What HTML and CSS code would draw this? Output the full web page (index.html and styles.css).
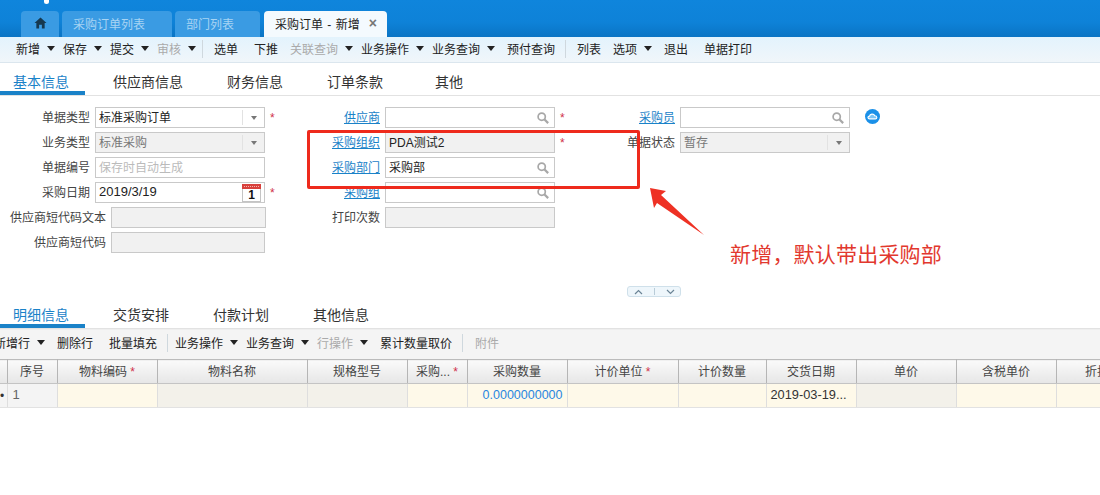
FILE: index.html
```html
<!DOCTYPE html>
<html lang="zh-CN">
<head>
    <meta charset="UTF-8">
    <title>采购订单 - 新增</title>
    <link rel="stylesheet" href="styles.css">
</head>
<body>
    <!-- 顶部标签 -->
    <div class="topbar">
        <span class="logo-dot"></span>
        <div class="tab tab-home">
            <svg width="13" height="12" viewBox="0 0 14 13"><path d="M7 0.5 L0.5 6.5 L2.5 6.5 L2.5 12.5 L5.5 12.5 L5.5 8.5 L8.5 8.5 L8.5 12.5 L11.5 12.5 L11.5 6.5 L13.5 6.5 Z" fill="#16384f"/></svg>
        </div>
        <div class="tab tab-list">采购订单列表</div>
        <div class="tab tab-dept">部门列表</div>
        <div class="tab tab-active">采购订单 - 新增<span class="tab-close">×</span></div>
    </div>

    <div class="toolbar">
        <span class="tool w-47">新增<i class="caret"></i></span>
        <span class="tool w-47">保存<i class="caret"></i></span>
        <span class="tool w-47">提交<i class="caret"></i></span>
        <span class="tool off w-45">审核<i class="caret"></i></span>
        <span class="sep"></span>
        <span class="tool w-40">选单</span>
        <span class="tool w-36">下推</span>
        <span class="tool off w-71">关联查询<i class="caret"></i></span>
        <span class="tool w-71">业务操作<i class="caret"></i></span>
        <span class="tool w-75">业务查询<i class="caret"></i></span>
        <span class="tool w-58">预付查询</span>
        <span class="sep"></span>
        <span class="tool w-36">列表</span>
        <span class="tool w-51">选项<i class="caret"></i></span>
        <span class="tool w-40">退出</span>
        <span class="tool">单据打印</span>
    </div>

    <div class="subtabs">
        <span class="subtab current">基本信息</span>
        <span class="subtab">供应商信息</span>
        <span class="subtab">财务信息</span>
        <span class="subtab">订单条款</span>
        <span class="subtab last">其他</span>
    </div>

    <!-- 表单 -->
    <div class="form">
        <div class="col col-first">
            <div class="row">
                <label>单据类型</label>
                <div class="field"><span class="val">标准采购订单</span><span class="drop"><i class="mini-caret"></i></span></div>
                <span class="star">*</span>
            </div>
            <div class="row">
                <label>业务类型</label>
                <div class="field locked"><span class="val muted">标准采购</span><span class="drop"><i class="mini-caret"></i></span></div>
            </div>
            <div class="row">
                <label>单据编号</label>
                <div class="field"><span class="val hint">保存时自动生成</span></div>
            </div>
            <div class="row">
                <label>采购日期</label>
                <div class="field"><span class="val date-val">2019/3/19</span>
                    <svg class="cal" width="19" height="18" viewBox="0 0 19 18"><rect x="0.5" y="0.5" width="18" height="17" fill="#fff" stroke="#c4c4c4"/><rect x="0" y="0" width="19" height="5" fill="#d8413c"/><path d="M2 2.5 H17" stroke="#f3b5b0" stroke-dasharray="1 1"/><text x="9.5" y="15" text-anchor="middle" class="cal-num">1</text></svg>
                </div>
                <span class="star">*</span>
            </div>
            <div class="row row-long">
                <label>供应商短代码文本</label>
                <div class="field locked"></div>
            </div>
            <div class="row row-long">
                <label>供应商短代码</label>
                <div class="field locked short"></div>
            </div>
        </div>

        <div class="col">
            <div class="row">
                <label><a>供应商</a></label>
                <div class="field"><span class="val"></span><svg class="search" width="12" height="12" viewBox="0 0 14 14"><circle cx="5.5" cy="5.5" r="4.2" fill="none" stroke="#a8a8a8" stroke-width="2"/><path d="M8.5 8.5 L13 13" stroke="#a8a8a8" stroke-width="2.6"/></svg></div>
                <span class="star">*</span>
            </div>
            <div class="row">
                <label><a>采购组织</a></label>
                <div class="field locked"><span class="val">PDA测试2</span></div>
                <span class="star">*</span>
            </div>
            <div class="row">
                <label><a>采购部门</a></label>
                <div class="field"><span class="val">采购部</span><svg class="search" width="12" height="12" viewBox="0 0 14 14"><circle cx="5.5" cy="5.5" r="4.2" fill="none" stroke="#a8a8a8" stroke-width="2"/><path d="M8.5 8.5 L13 13" stroke="#a8a8a8" stroke-width="2.6"/></svg></div>
            </div>
            <div class="row">
                <label><a>采购组</a></label>
                <div class="field"><span class="val"></span><svg class="search" width="12" height="12" viewBox="0 0 14 14"><circle cx="5.5" cy="5.5" r="4.2" fill="none" stroke="#a8a8a8" stroke-width="2"/><path d="M8.5 8.5 L13 13" stroke="#a8a8a8" stroke-width="2.6"/></svg></div>
            </div>
            <div class="row">
                <label>打印次数</label>
                <div class="field locked"></div>
            </div>
        </div>

        <div class="col">
            <div class="row">
                <label><a>采购员</a></label>
                <div class="field"><span class="val"></span><svg class="search" width="12" height="12" viewBox="0 0 14 14"><circle cx="5.5" cy="5.5" r="4.2" fill="none" stroke="#a8a8a8" stroke-width="2"/><path d="M8.5 8.5 L13 13" stroke="#a8a8a8" stroke-width="2.6"/></svg></div>
                <svg class="cloud" width="15" height="15" viewBox="0 0 16 16"><circle cx="8" cy="8" r="8" fill="#1a90e8"/><path d="M5 10.5 C2.6 10.5 2.6 7.6 4.8 7.6 C5.2 5 9.4 4.6 10.4 7.2 C13 7 13.4 10.5 11 10.5 Z" fill="#7cc4f4" stroke="#fff" stroke-width="1.2"/></svg>
            </div>
            <div class="row">
                <label>单据状态</label>
                <div class="field locked"><span class="val muted">暂存</span><span class="drop"><i class="mini-caret"></i></span></div>
            </div>
        </div>
    </div>

    <div class="collapse">
        <span class="collapse-btn">
            <svg width="9" height="6" viewBox="0 0 9 6"><path d="M1 5 L4.5 1.5 L8 5" fill="none" stroke="#6b8496" stroke-width="1.2"/></svg>
            <i class="collapse-sep"></i>
            <svg width="9" height="6" viewBox="0 0 9 6"><path d="M1 1 L4.5 4.5 L8 1" fill="none" stroke="#6b8496" stroke-width="1.2"/></svg>
        </span>
    </div>

    <div class="subtabs subtabs-detail">
        <span class="subtab current">明细信息</span>
        <span class="subtab">交货安排</span>
        <span class="subtab">付款计划</span>
        <span class="subtab">其他信息</span>
    </div>

    <div class="toolbar toolbar-grey">
        <span class="tool w-51 pull">新增行<i class="caret"></i></span>
        <span class="tool w-52">删除行</span>
        <span class="tool w-58">批量填充</span>
        <span class="sep"></span>
        <span class="tool w-71">业务操作<i class="caret"></i></span>
        <span class="tool w-71">业务查询<i class="caret"></i></span>
        <span class="tool off w-63">行操作<i class="caret"></i></span>
        <span class="tool w-82">累计数量取价</span>
        <span class="sep"></span>
        <span class="tool off">附件</span>
    </div>

    <!-- 明细表 -->
    <div class="grid-wrap">
        <table class="grid">
            <colgroup>
                <col class="c7"><col class="c50"><col class="c100"><col class="c150"><col class="c100"><col class="c60"><col class="c100"><col class="c111"><col class="c88"><col class="c90"><col class="c100"><col class="c100"><col class="c82">
            </colgroup>
            <thead>
                <tr>
                    <th></th><th>序号</th><th>物料编码 <em>*</em></th><th>物料名称</th><th>规格型号</th><th>采购... <em>*</em></th><th>采购数量</th><th>计价单位 <em>*</em></th><th>计价数量</th><th>交货日期</th><th>单价</th><th>含税单价</th><th>折扣</th>
                </tr>
            </thead>
            <tbody>
                <tr>
                    <td class="grey mark">•</td><td class="grey num">1</td><td class="req"></td><td class="lock"></td><td class="lock"></td><td class="req"></td><td class="req qty">0.0000000000</td><td class="req"></td><td class="req"></td><td class="req date">2019-03-19...</td><td class="lock"></td><td class="req"></td><td class="req"></td>
                </tr>
            </tbody>
        </table>
    </div>

    <!-- 截图标注 -->
    <div class="mark-box"></div>
    <svg class="mark-arrow" width="56" height="50" viewBox="0 0 56 50"><path d="M0 0 L16 3 L11 7 L54 47 L7 15 L4 20 Z" fill="#ee3124"/></svg>
    <div class="mark-text">新增，默认带出采购部</div>
</body>
</html>
```

FILE: styles.css
```css
* {
    margin: 0;
    padding: 0;
    box-sizing: border-box;
}

body {
    position: relative;
    height: 495px;
    overflow: hidden;
    background: #fff;
    color: #333;
    font-family: "Liberation Sans", "Noto Sans CJK SC", sans-serif;
    font-size: 12px;
}

/* 顶部标签 */
.topbar {
    position: relative;
    display: flex;
    align-items: flex-end;
    gap: 3px;
    height: 37px;
    padding-left: 21px;
    background: linear-gradient(to bottom, #0f85dc, #0e82d8 60%, #0a74c4);
}

.logo-dot {
    position: absolute;
    top: 0;
    left: 44px;
    width: 5px;
    height: 4px;
    border-radius: 0 0 3px 3px;
    background: #fff;
}

.tab {
    display: flex;
    align-items: center;
    height: 26px;
    padding-bottom: 2px;
    border-radius: 4px 4px 0 0;
    background: #3a9be3;
    color: #a8d4f3;
}

.tab-home {
    justify-content: center;
    width: 38px;
}

.tab-list {
    width: 110px;
    padding-left: 11px;
}

.tab-dept {
    width: 85px;
    padding-left: 11px;
}

.tab-active {
    width: 123px;
    margin-left: 1px;
    padding-left: 11px;
    background: #f4fafe;
    color: #222;
    word-spacing: 1px;
}

.tab-close {
    margin-left: 9px;
    color: #777;
    font-size: 14px;
    font-weight: bold;
}

/* 工具栏 */
.toolbar {
    display: flex;
    align-items: center;
    height: 26px;
    padding-left: 16px;
    padding-bottom: 2px;
    border-bottom: 1px solid #dbe6ee;
    background: linear-gradient(to bottom, #e3f3fd, #f0f6fa);
    color: #222;
    white-space: nowrap;
}

.tool {
    display: flex;
    align-items: center;
    flex: none;
}

.tool.off {
    color: #aaa;
}

.caret {
    width: 0;
    height: 0;
    margin-left: 7px;
    border-left: 4px solid transparent;
    border-right: 4px solid transparent;
    border-top: 5px solid #222;
}

.w-36 { width: 36px; }
.w-40 { width: 40px; }
.w-45 { width: 45px; }
.w-47 { width: 47px; }
.w-51 { width: 51px; }
.w-52 { width: 52px; }
.w-58 { width: 58px; }
.w-63 { width: 63px; }
.w-71 { width: 71px; }
.w-75 { width: 75px; }
.w-82 { width: 82px; }

.sep {
    flex: none;
    width: 1px;
    height: 18px;
    margin-right: 11px;
    background: #cfd8de;
}

/* 子页签 */
.subtabs {
    display: flex;
    height: 33px;
    border-bottom: 1px solid #e2e2e2;
    color: #333;
    font-size: 14px;
    line-height: 39px;
}

.subtab {
    margin-right: 44px;
    flex: none;
}

.subtab.current {
    width: 85px;
    margin-right: 28px;
    padding-left: 13px;
    border-bottom: 4px solid #1a82c8;
    color: #1a82c8;
}

.subtab.last {
    margin-left: 8px;
}

/* 表单 */
.form {
    display: flex;
    padding-top: 11px;
}

.col {
    display: flex;
    flex-direction: column;
    gap: 4px;
    width: 295px;
}

.row {
    display: flex;
    align-items: center;
    height: 21px;
}

.row label {
    flex: none;
    width: 85px;
    padding-bottom: 2px;
    color: #444;
    text-align: right;
    white-space: nowrap;
}

.col-first .row label {
    width: 90px;
}

.col-first .row-long label {
    width: 106px;
}

.row a {
    color: #1a82c8;
    text-decoration: underline;
}

.field {
    display: flex;
    align-items: center;
    flex: none;
    width: 170px;
    height: 21px;
    margin-left: 5px;
    padding-left: 3px;
    border: 1px solid #c9c9c9;
    background: #fff;
    color: #222;
}

.row-long .field {
    width: 155px;
}

.row-long .field.short {
    width: 154px;
}

.field.locked {
    background: #f1f1f1;
}

.val {
    flex: 1;
    padding-bottom: 2px;
    white-space: nowrap;
}

.val.muted {
    color: #777;
}

.val.hint {
    color: #bbb;
}

.date-val {
    font-size: 13px;
}

.drop {
    display: flex;
    align-items: center;
    justify-content: center;
    flex: none;
    width: 22px;
    height: 15px;
    border-left: 1px solid #e2e2e2;
}

.mini-caret {
    width: 0;
    height: 0;
    border-left: 3px solid transparent;
    border-right: 3px solid transparent;
    border-top: 4px solid #777;
}

.cal {
    flex: none;
    margin-right: 3px;
}

.cal-num {
    fill: #111;
    font-family: "Liberation Sans", sans-serif;
    font-size: 12px;
    font-weight: bold;
}

.search {
    flex: none;
    margin-right: 5px;
}

.star {
    margin-left: 5px;
    color: #d0304a;
    font-size: 12px;
}

.cloud {
    flex: none;
    margin-left: 15px;
    margin-bottom: 2px;
}

/* 折叠按钮 */
.collapse {
    display: flex;
    height: 11px;
    margin-top: 33px;
    padding-left: 627px;
}

.collapse-btn {
    display: flex;
    align-items: center;
    justify-content: space-around;
    width: 54px;
    height: 11px;
    border: 1px solid #cfe0ea;
    border-radius: 3px;
    background: #eef6fb;
}

.collapse-sep {
    width: 1px;
    height: 7px;
    background: #b9ccd8;
}

.subtabs-detail {
    height: 32px;
    line-height: 37px;
}

.toolbar-grey {
    height: 30px;
    padding-left: 0;
    padding-bottom: 4px;
    border-top: 1px solid #eee;
    border-bottom: 0;
    background: #f4f4f4;
}

.toolbar-grey .sep {
    margin-left: 0;
    margin-right: 7px;
}

.toolbar-grey .w-82 + .sep {
    margin-right: 12px;
}

.pull {
    margin-left: -6px;
    width: 63px;
}

/* 明细表 */
.grid-wrap {
    overflow: hidden;
}

.grid {
    width: 1138px;
    border-collapse: collapse;
    table-layout: fixed;
}

.c7 { width: 7px; }
.c50 { width: 50px; }
.c60 { width: 60px; }
.c82 { width: 82px; }
.c88 { width: 88px; }
.c90 { width: 90px; }
.c100 { width: 100px; }
.c111 { width: 111px; }
.c150 { width: 150px; }

.grid th {
    height: 24px;
    padding-bottom: 3px;
    border-top: 1px solid #bbb;
    border-bottom: 1px solid #c4c4c4;
    border-right: 1px solid #b5b5b5;
    background: linear-gradient(to bottom, #fafafa, #e6e6e6);
    color: #444;
    font-weight: normal;
    white-space: nowrap;
}

.grid th em {
    color: #d0304a;
    font-style: normal;
}

.grid td {
    height: 24px;
    padding: 0 4px 2px;
    border-bottom: 1px solid #e2e2e2;
    border-right: 1px solid #dedede;
    white-space: nowrap;
}

.grid td.grey {
    background: #f4f4f4;
    color: #666;
}

.grid td.mark {
    padding: 0;
    color: #333;
}

.grid td.num {
    padding-left: 5px;
    font-size: 13px;
}

.grid td.req {
    background: #fef9e9;
}

.grid td.lock {
    background: #f3f1ea;
}

.grid td.qty {
    color: #2a86e0;
    font-size: 12.5px;
    text-align: right;
}

.grid td.date {
    color: #333;
    font-size: 12.8px;
}

/* 截图标注 */
.mark-box {
    position: absolute;
    top: 130px;
    left: 307px;
    width: 333px;
    height: 59px;
    border: 3px solid #ee2a1c;
    border-radius: 2px;
}

.mark-arrow {
    position: absolute;
    top: 188px;
    left: 650px;
}

.mark-text {
    position: absolute;
    top: 241px;
    left: 730px;
    color: #e2382e;
    font-size: 21px;
    letter-spacing: 0.2px;
    line-height: 28px;
    white-space: nowrap;
}
```
